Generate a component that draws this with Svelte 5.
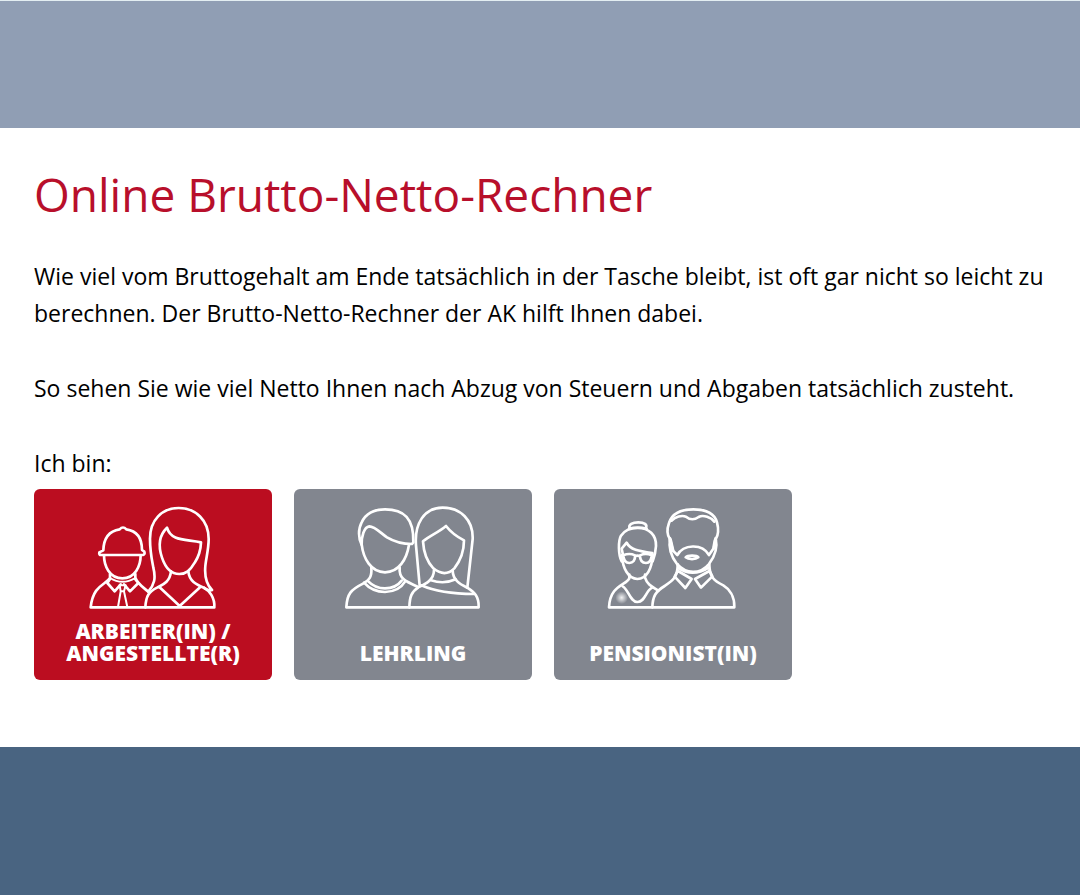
<script>
  let selected = $state('arbeiter');
</script>

<div class="page">
  <header class="banner"></header>

  <main>
    <h1>Online Brutto-Netto-Rechner</h1>
    <p>
      Wie viel vom Bruttogehalt am Ende tatsächlich in der Tasche bleibt, ist oft gar nicht so leicht zu
      berechnen. Der Brutto-Netto-Rechner der AK hilft Ihnen dabei.
    </p>
    <p>So sehen Sie wie viel Netto Ihnen nach Abzug von Steuern und Abgaben tatsächlich zusteht.</p>

    <p class="question" id="ich-bin">Ich bin:</p>
    <div class="choices" role="group" aria-labelledby="ich-bin">
      <button type="button" class:active={selected === 'arbeiter'} aria-pressed={selected === 'arbeiter'} onclick={() => (selected = 'arbeiter')}>
        <svg viewBox="4 0 435 360" width="145" height="120" aria-hidden="true">
          <!-- worker with helmet -->
          <path d="M59 172 Q57 180 65 180 H190 Q197 178 194 170 L187 165 C187 132 174 108 140 103 Q130 92 120 103 C88 108 72 132 71 166 Z" />
          <path d="M73 181 C73 212 89 250 128 250 C167 250 183 212 183 181" />
          <path d="M91 237 V249 C78 270 40 270 33 337 H404 C406 308 388 286 374 279" />
          <path d="M167 237 V248 C174 267 193 279 206 290" />
          <path class="thin" d="M91 249 Q128 272 167 249" />
          <path d="M91 252 L83 264 L105 289 L123 268 M166 252 L176 264 L151 289 L133 268" />
          <path class="thin" d="M120 271 H138 L133 289 H123 Z M123 289 L115 336 M133 289 L143 336" />
          <!-- woman with long hair -->
          <path d="M206 290 C224 269 229 250 221 218 C216 191 211 169 211 131 C211 75 247 39 297 39 C348 39 387 76 387 132 C387 163 379 190 377 213 C374 248 382 270 397 285 C390 288 383 285 374 279" />
          <path d="M262 98 C274 139 315 132 364 142 C363 171 357 185 345 203 C331 227 319 237 299 237 C274 237 257 218 247 188 C233 146 240 119 262 98 Z" />
          <path d="M274 229 C270 264 246 270 232 278 C207 291 199 302 197 337" />
          <path d="M326 229 C329 259 350 268 374 279" />
          <path d="M239 276 L300 333 L362 276" />
        </svg>
        <span>Arbeiter(in) /<br />Angestellte(r)</span>
      </button>

      <button type="button" class:active={selected === 'lehrling'} aria-pressed={selected === 'lehrling'} onclick={() => (selected = 'lehrling')}>
        <svg viewBox="4 0 465 360" width="155" height="120" aria-hidden="true">
          <!-- young man -->
          <path d="M81 150 C71 131 70 102 81 82 C94 54 119 43 151 43 C208 43 238 70 236 142 L232 147 C201 147 177 139 157 127 C140 116 121 94 104 94 C88 96 80 125 81 150 Z" />
          <path d="M81 148 C86 191 109 231 151 232 C193 231 216 193 223 149" />
          <path d="M110 217 C112 246 105 254 85 266 C49 284 37 296 35 337 H432 C433 303 419 292 398 278" />
          <path d="M195 217 C192 251 212 259 250 276" />
          <path d="M88 263 Q113 291 151 291 Q193 290 211 260" />
          <path d="M101 259 Q121 280 151 280 Q184 280 201 257" />
          <!-- young woman -->
          <path d="M255 272 L244 151 C239 88 267 38 324 38 C378 38 416 75 414 132 L398 278" />
          <path d="M334 93 C313 111 286 122 265 139 C267 174 280 203 296 220 C319 239 341 238 359 220 C375 200 388 168 388 136 C368 126 348 111 334 93 Z" />
          <path d="M298 225 C298 257 268 269 251 277 C231 290 225 304 224 337" />
          <path d="M354 225 C354 258 380 269 398 278" />
          <path d="M289 256 Q328 269 363 253" />
          <path d="M260 271 C304 291 351 297 418 297" />
        </svg>
        <span>Lehrling</span>
      </button>

      <button type="button" class:active={selected === 'pensionist'} aria-pressed={selected === 'pensionist'} onclick={() => (selected = 'pensionist')}>
        <svg viewBox="4 0 435 360" width="145" height="120" aria-hidden="true">
          <defs>
            <radialGradient id="brosche">
              <stop offset="0" stop-color="#fff" stop-opacity="0.9" />
              <stop offset="1" stop-color="#fff" stop-opacity="0" />
            </radialGradient>
          </defs>
          <!-- older woman with glasses -->
          <path d="M90 101 C85 88 99 82 116 82 C133 82 145 88 138 101 M88 101 Q114 94 141 101" />
          <path d="M66 199 C56 181 55 138 64 122 C75 105 92 99 114 99 C148 99 170 119 169 153 C168 174 163 188 159 199" />
          <path d="M70 179 L66 161 L81 143 C91 164 117 169 158 174 L159 181" />
          <path d="M67 180 C68 219 86 251 113 252 C142 252 157 219 159 180" />
          <path d="M71 181 Q89 173 106 181 C107 196 100 204 89 204 C77 204 72 195 71 181 Z M121 181 Q138 173 156 181 C155 196 149 204 139 204 C127 204 121 196 121 181 Z M106 184 Q113 180 121 184" />
          <path d="M89 239 V250 C79 271 31 270 28 337 H404 C405 303 388 281 371 271 C344 258 329 246 329 208" />
          <path d="M136 239 V248 C143 270 159 276 176 287" />
          <path d="M69 274 C86 282 91 321 113 321 C137 320 137 289 157 278" />
          <circle class="brooch" cx="66" cy="308" r="19" />
          <!-- older man with beard -->
          <path d="M211 133 C202 120 202 101 208 84 C217 55 240 43 281 43 C320 43 345 57 352 82 C358 105 357 119 348 133" />
          <path d="M216 77 C227 65 246 60 259 65 Q277 80 297 66 C311 58 335 68 344 80" />
          <path d="M211 130 C206 161 215 186 232 207 C259 238 301 239 328 207 C347 182 354 156 348 130" />
          <path d="M211 131 L219 166 L233 180 C251 148 307 144 328 180 L343 158 L348 131" />
          <path class="beard" d="M212 136 L219 166 M347 136 L343 158" />
          <path d="M258 187 C264 180 291 180 296 187 C288 194 266 194 258 187 Z" />
          <path d="M234 208 C235 248 215 260 195 273 C168 289 159 304 158 337" />
          <path d="M235 219 Q278 248 328 218" />
          <path d="M234 228 L225 245 L257 279 L276 252 L235 228 M329 226 L338 244 L304 278 L286 252 L329 228" />
        </svg>
        <span>Pensionist(in)</span>
      </button>
    </div>
  </main>

  <footer></footer>
</div>

<style>
  :global(body) {
    margin: 0;
    background: #fff;
  }

  .page {
    display: flex;
    flex-direction: column;
    min-height: 100vh;
    font-family: "Open Sans", "Noto Sans", sans-serif;
    color: #000;
  }

  .banner {
    height: 127px;
    border-top: 1px solid #e3eef2;
    background: #909eb4;
  }

  main {
    padding: 33px 34px 67px;
  }

  h1 {
    margin: 0 0 30px;
    font-size: 46px;
    font-weight: 400;
    line-height: 67px;
    color: #b80f2b;
  }

  p {
    margin: 0 0 38px;
    font-size: 23px;
    line-height: 37px;
  }

  .question {
    margin-bottom: 7px;
  }

  .choices {
    display: flex;
    flex-wrap: wrap;
    gap: 22px;
  }

  button {
    display: flex;
    flex-direction: column;
    align-items: center;
    justify-content: space-between;
    width: 238px;
    height: 191px;
    padding: 6px 8px 16px;
    border: none;
    border-radius: 6px;
    background: #82868f;
    color: #fff;
    font-family: inherit;
    font-size: 21px;
    font-weight: 800;
    line-height: 22px;
    text-transform: uppercase;
    cursor: pointer;
  }

  button.active {
    background: #bb0d20;
  }

  svg {
    fill: none;
    stroke: #fff;
    stroke-width: 8;
    stroke-linejoin: round;
    stroke-linecap: round;
  }

  .thin {
    stroke-width: 6;
  }

  .beard {
    stroke-width: 11;
  }

  .brooch {
    fill: url(#brosche);
    stroke: none;
  }

  footer {
    flex: 1;
    min-height: 100px;
    background: #496481;
  }
</style>
